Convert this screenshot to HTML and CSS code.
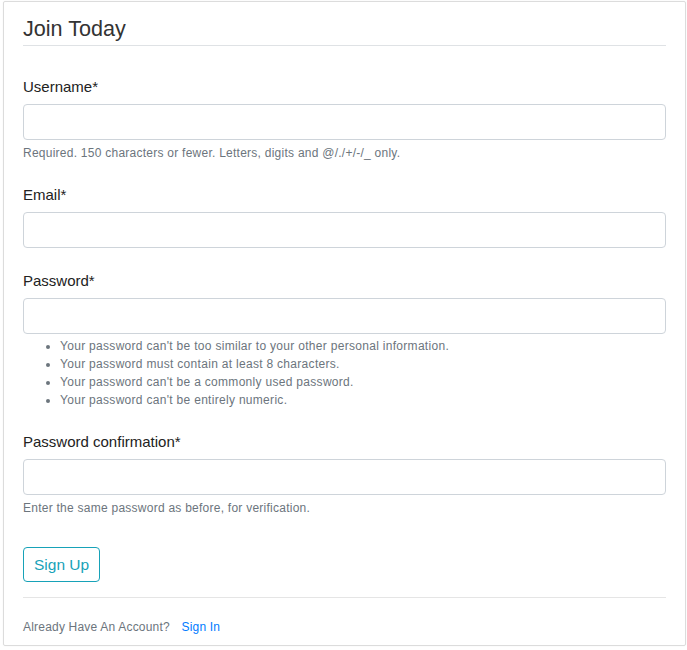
FILE: index.html
```html
<!DOCTYPE html>
<html>
<head>
<meta charset="utf-8">
<link rel="stylesheet" href="styles.css">
</head>
<body>
<div class="page">
  <div class="card">
    <form class="form">
      <h2 class="legend">Join Today</h2>
      <div class="group first">
        <label class="label">Username*</label>
        <input class="input" type="text">
        <small class="help">Required. 150 characters or fewer. Letters, digits and @/./+/-/_ only.</small>
      </div>
      <div class="group">
        <label class="label">Email*</label>
        <input class="input" type="email">
      </div>
      <div class="group">
        <label class="label">Password*</label>
        <input class="input" type="password">
        <ul class="rules">
          <li>Your password can't be too similar to your other personal information.</li>
          <li>Your password must contain at least 8 characters.</li>
          <li>Your password can't be a commonly used password.</li>
          <li>Your password can't be entirely numeric.</li>
        </ul>
      </div>
      <div class="group">
        <label class="label">Password confirmation*</label>
        <input class="input" type="password">
        <small class="help">Enter the same password as before, for verification.</small>
      </div>
      <div class="actions">
        <button class="btn" type="button">Sign Up</button>
      </div>
    </form>
    <div class="footer">
      <span class="muted">Already Have An Account?</span>
      <a class="link" href="#">Sign In</a>
    </div>
  </div>
</div>
</body>
</html>
```
FILE: styles.css
```css
* { box-sizing: border-box; }
html, body { margin: 0; background: #fff; }
body {
  font-family: "Liberation Sans", Arial, sans-serif;
  color: #212529;
}
.page {
  padding: 1px 1px 4px 3px;
}
.card {
  border: 1px solid #dcdcdc;
  border-radius: 2px;
  background: #fff;
  padding: 14px 19px 9px 19px;
  height: 645px;
  box-shadow: 0 0 2px rgba(0,0,0,0.05);
}
.form { margin: 0; }
.legend {
  margin: 0;
  font-size: 21.6px;
  font-weight: 400;
  line-height: 26px;
  padding-bottom: 3px;
  border-bottom: 1px solid #dfe2e5;
  color: #333;
}
.group {
  display: flex;
  flex-direction: column;
  margin-bottom: 22px;
}
.group.first { margin-top: 30px; }
.label {
  font-size: 15px;
  line-height: 21px;
  margin-bottom: 7px;
  color: #222;
}
.input {
  height: 36px;
  border: 1px solid #ced4da;
  border-radius: 4px;
  background: #fff;
  font: inherit;
  padding: 0 12px;
  width: 100%;
}
.help {
  font-size: 12px;
  letter-spacing: 0.25px;
  line-height: 17px;
  margin-top: 5px;
  color: #6c757d;
}
.rules {
  margin: 3px 0 0 0;
  padding-left: 37px;
  font-size: 12px;
  letter-spacing: 0.3px;
  line-height: 18px;
  color: #6c757d;
}
.actions {
  padding-top: 8px;
  padding-bottom: 15px;
  border-bottom: 1px solid #e5e5e5;
}
.btn {
  font: inherit;
  font-size: 15.5px;
  height: 35px;
  padding: 0 10px;
  color: #17a2b8;
  background: #fff;
  border: 1px solid #17a2b8;
  border-radius: 4px;
}
.footer {
  padding-top: 21px;
  font-size: 12px;
  letter-spacing: 0.2px;
  line-height: 16px;
}
.muted { color: #6c757d; }
.link {
  color: #007bff;
  text-decoration: none;
  margin-left: 8px;
}
```
